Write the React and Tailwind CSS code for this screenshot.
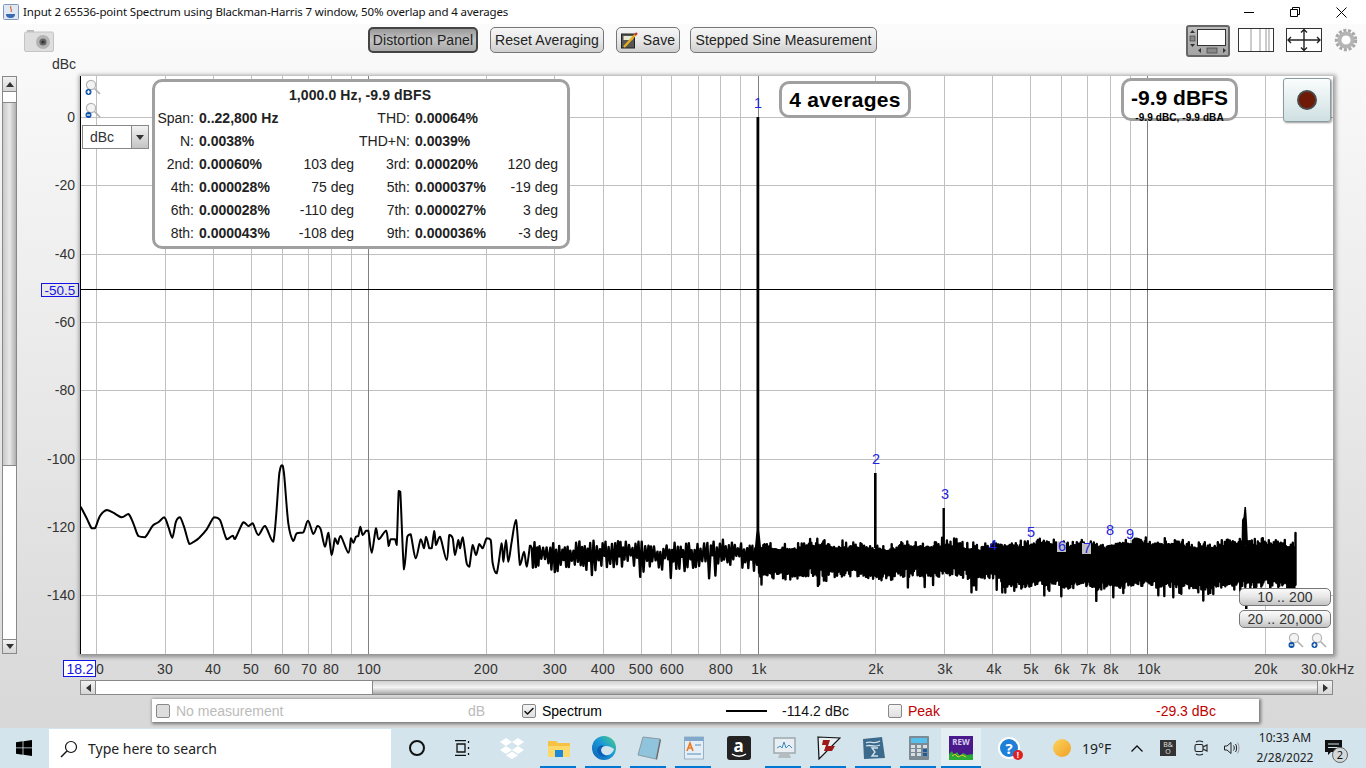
import { Check } from 'lucide-react';

const LIB = "font-['Liberation_Sans',sans-serif]";
const NOTO = "font-['Noto_Sans',sans-serif]";

// log frequency scale, about 390px per decade
const fx = (f) => 368.4 + 389.5 * Math.log10(f / 100);
const GRID_F = [20, 30, 40, 50, 60, 70, 80, 90, 200, 300, 400, 500, 600, 700, 800, 900, 2000, 3000, 4000, 5000, 6000, 7000, 8000, 9000, 20000];
const DARK_F = [100, 1000, 10000];
const GRID_Y = [117, 185, 254, 322, 390, 459, 527, 595];
const Y_LABELS = ['0', '-20', '-40', '-60', '-80', '-100', '-120', '-140'];
const X_LABELS = [
    [100, '0'], [165, '30'], [213, '40'], [251, '50'], [282, '60'], [309, '70'], [331, '80'], [369, '100'],
    [486, '200'], [555, '300'], [603, '400'], [641, '500'], [672, '600'], [721, '800'], [759, '1k'], [876, '2k'],
    [945, '3k'], [994, '4k'], [1031, '5k'], [1062, '6k'], [1088, '7k'], [1111, '8k'], [1149, '10k'], [1266, '20k'],
];
const MARKERS = [
    [758, 108, '1'], [876, 464, '2'], [945, 499, '3'], [993, 550, '4'], [1031, 537, '5'],
    [1062, 551, '6'], [1087, 553, '7'], [1110, 535, '8'], [1130, 539, '9'],
];

// low frequency part of the trace, traced by eye (x/3+70, y/3+440)
const LOW = [
    [32,200],[50,235],[65,265],[75,265],[90,228],[110,210],[130,218],[155,232],[175,222],[190,250],[205,288],[225,292],
    [248,257],[265,247],[283,232],[295,260],[307,293],[318,245],[330,232],[342,260],[358,312],[372,305],[388,293],[410,268],
    [432,232],[450,240],[470,298],[488,287],[495,297],[520,247],[535,258],[548,250],[565,285],[585,258],[610,305],[628,100],[636,76],
    [642,100],[655,250],[670,303],[680,280],[700,277],[714,242],[730,282],[742,258],[752,268],[765,320],[775,278],[785,345],
    [795,295],[803,312],[812,288],[835,338],[843,295],[850,308],[858,290],[865,288],[871,260],[878,285],[888,272],[895,272],
    [905,338],[918,265],[926,298],[948,272],[956,318],[962,298],[975,298],[980,315],[986,153],[991,155],[1002,388],[1012,290],
    [1022,283],[1037,355],[1052,298],[1062,325],[1068,290],[1078,325],[1085,325],[1093,273],[1098,315],[1110,290],[1130,360],
    [1138,285],[1148,295],[1155,345],[1165,300],[1170,325],[1178,292],[1190,370],[1198,380],[1208,315],[1218,345],[1228,312],
    [1238,325],[1250,295],[1262,300],[1268,370],[1280,400],[1295,310],[1300,365],[1308,300],[1315,365],[1325,305],[1338,240],
    [1350,375],[1362,335],[1370,380],[1380,315],
].map(([x, y]) => [x / 3 + 70, y / 3 + 440]);

const clamp = (v, a, b) => Math.min(Math.max(v, Math.min(a, b)), Math.max(a, b));

// Catmull-Rom for the smooth part, y clamped so peaks don't overshoot
const buildLow = () => {
    let d = `M${LOW[0][0]} ${LOW[0][1]}`;
    for (let i = 0; i < LOW.length - 1; i++) {
        const p0 = LOW[Math.max(i - 1, 0)];
        const p1 = LOW[i];
        const p2 = LOW[i + 1];
        const p3 = LOW[Math.min(i + 2, LOW.length - 1)];
        const c1x = p1[0] + (p2[0] - p0[0]) / 6;
        const c1y = clamp(p1[1] + (p2[1] - p0[1]) / 6, p1[1], p2[1]);
        const c2x = p2[0] - (p3[0] - p1[0]) / 6;
        const c2y = clamp(p2[1] - (p3[1] - p1[1]) / 6, p1[1], p2[1]);
        d += `C${c1x.toFixed(1)} ${c1y.toFixed(1)} ${c2x.toFixed(1)} ${c2y.toFixed(1)} ${p2[0].toFixed(1)} ${p2[1].toFixed(1)}`;
    }
    return d;
};

// noise floor: alternate between top and bottom of the band
const buildNoise = () => {
    let seed = 12345;
    const rnd = () => {
        seed = (seed * 16807) % 2147483647;
        return seed / 2147483647;
    };
    let x = 530;
    let up = true;
    let d = `M530 ${LOW[LOW.length - 1][1]}`;
    while (x < 1295) {
        const wander = 1.5 * Math.sin(x / 17) + Math.sin(x / 7.3);
        let y;
        if (x < 758) {
            const mid = 552 + wander;
            y = up ? mid - 2 - rnd() * 9 : mid + 4 + rnd() * 13 + (rnd() < 0.16 ? rnd() * 14 : 0);
            x += 1.1 + rnd() * 0.8;
        } else if (x < 1000) {
            y = up ? 549 + wander - rnd() * rnd() * 10 : 569 + wander + rnd() * 9 + (rnd() < 0.14 ? rnd() * 17 : 0);
            x += 0.6;
        } else {
            y = up ? 547 + wander - rnd() * rnd() * 9 : 580 + wander + rnd() * 8 + (rnd() < 0.12 ? rnd() * 15 : 0);
            x += 0.5;
        }
        d += `L${x.toFixed(1)} ${y.toFixed(1)}`;
        up = !up;
    }
    d += 'L1295.5 533L1295.5 585';
    return d;
};
const TRACE_LOW = buildLow();
const TRACE_NOISE = buildNoise();

const Btn = ({ children, pressed, className = '' }) => (
    <div className={`h-[26px] flex items-center justify-center rounded-[5px] border text-[14px] tracking-[0.1px] text-[#222] ${pressed ? 'border-[#444] border-2 bg-linear-to-b from-[#9a9a9a] via-[#c4c4c4] to-[#a8a8a8]' : 'border-[#777] bg-linear-to-b from-[#f6f6f6] via-[#e8e8e8] to-[#cfcfcf]'} ${className}`}>
        {children}
    </div>
);

const Magnifier = ({ minus, className = '' }) => (
    <svg width="16" height="17" viewBox="0 0 16 17" className={className}>
        <circle cx="6" cy="6" r="4.6" fill="#f3f3f3" stroke="#b4b4b4" strokeWidth="1.2" />
        <line x1="9.5" y1="9.5" x2="15" y2="15" stroke="#b0b0b0" strokeWidth="1.6" />
        <circle cx="3.5" cy="13" r="3" fill="#0b4fa8" />
        <line x1="1.8" y1="13" x2="5.2" y2="13" stroke="#fff" strokeWidth="1.2" />
        {!minus && <line x1="3.5" y1="11.3" x2="3.5" y2="14.7" stroke="#fff" strokeWidth="1.2" />}
    </svg>
);

const Arrow = ({ dir }) => {
    const pts = { up: '0,5 8,5 4,0', down: '0,0 8,0 4,5', left: '5,0 5,8 0,4', right: '0,0 0,8 5,4' }[dir];
    const vertical = dir === 'up' || dir === 'down';
    return (
        <svg width={vertical ? 8 : 5} height={vertical ? 5 : 8}>
            <polygon points={pts} fill="#333" />
        </svg>
    );
};

const ScrollBtn = ({ dir, className = '' }) => (
    <div className={`flex items-center justify-center bg-linear-to-b from-[#f2f2f2] to-[#d6d6d6] ${className}`}>
        <Arrow dir={dir} />
    </div>
);

const Toolbar = () => (
    <div className="h-[52px] flex shrink-0">
        <div className="w-[368px] shrink-0 flex flex-col">
            <svg width="30" height="22" viewBox="0 0 30 22" className="ml-[24px] mt-[6px]">
                <rect x="3" y="0" width="7" height="3" fill="#bbb" />
                <rect x="0.5" y="2" width="29" height="19.5" rx="1.5" fill="#dedede" stroke="#c4c4c4" />
                <circle cx="19" cy="12" r="7" fill="#b4b4b4" />
                <circle cx="19" cy="12" r="3.6" fill="#666" />
                <circle cx="19" cy="12" r="1.6" fill="#333" />
            </svg>
            <div className="ml-[52px] mt-[4px] text-[14px] leading-[16px] text-[#333]">dBc</div>
        </div>
        <div className="flex items-start pt-[3px] w-[509px] shrink-0">
            <Btn pressed className="w-[110px]">Distortion Panel</Btn>
            <Btn className="w-[114px] ml-[12px]">Reset Averaging</Btn>
            <Btn className="w-[64px] ml-[12px] gap-[5px]">
                <svg width="17" height="17" viewBox="0 0 17 17">
                    <rect x="0.5" y="2" width="13" height="14" fill="#555" stroke="#222" />
                    <rect x="2.5" y="4" width="9" height="4" fill="#e8e8d0" />
                    <line x1="3" y1="15" x2="15" y2="2" stroke="#e8b020" strokeWidth="2.4" />
                    <line x1="14" y1="3" x2="16" y2="1" stroke="#c8342a" strokeWidth="2.4" />
                </svg>
                Save
            </Btn>
            <Btn className="w-[187px] ml-[10px]">Stepped Sine Measurement</Btn>
        </div>
        <div className="flex items-start pt-[1px] ml-[309px]">
            <div className="w-[44px] h-[32px] rounded-[3px] border-2 border-[#666] bg-linear-to-b from-[#bdbdbd] to-[#a4a4a4] shrink-0">
                <svg width="40" height="28" viewBox="0 0 40 28">
                    <rect x="9.5" y="2.5" width="28" height="16" fill="#fff" stroke="#333" />
                    <polygon points="2,6 7,6 4.5,3" fill="#333" />
                    <rect x="2" y="9" width="5" height="5" fill="#888" stroke="#333" strokeWidth="0.6" />
                    <polygon points="2,17 7,17 4.5,20" fill="#333" />
                    <polygon points="13,21 13,26 10,23.5" fill="#333" />
                    <rect x="19" y="21" width="10" height="5" fill="#888" stroke="#333" strokeWidth="0.6" />
                    <polygon points="35,21 35,26 38,23.5" fill="#333" />
                </svg>
            </div>
            <svg width="36" height="24" viewBox="0 0 36 24" className="ml-[8px] mt-[3px] shrink-0">
                <rect x="0.5" y="0.5" width="35" height="23" fill="#fff" stroke="#333" />
                {[13, 22, 28, 31].map((x) => <line key={x} x1={x} y1="1" x2={x} y2="23" stroke="#999" />)}
            </svg>
            <svg width="36" height="24" viewBox="0 0 36 24" className="ml-[12px] mt-[3px] shrink-0">
                <rect x="0.5" y="0.5" width="35" height="23" fill="#fff" stroke="#333" />
                <path d="M2 12H34M18 1.5V22.5M5 9L2 12L5 15M31 9L34 12L31 15M15 4.5L18 1.5L21 4.5M15 19.5L18 22.5L21 19.5" fill="none" stroke="#222" strokeWidth="1.4" />
            </svg>
            <svg width="24" height="24" viewBox="0 0 24 24" className="ml-[12px] mt-[3px] shrink-0">
                <circle cx="12" cy="12" r="9.6" fill="none" stroke="#a8a8a8" strokeWidth="3.2" strokeDasharray="3 1.7" />
                <circle cx="12" cy="12" r="6.6" fill="none" stroke="#b4b4b4" strokeWidth="4" />
                <circle cx="12" cy="12" r="4" fill="#fff" />
            </svg>
        </div>
    </div>
);

const StatLabel = ({ children }) => <div className="text-right whitespace-nowrap">{children}</div>;
const StatValue = ({ children }) => <div className="pl-[5px] font-bold whitespace-nowrap">{children}</div>;
const StatDeg = ({ children }) => <div className="text-right whitespace-nowrap">{children}</div>;

const STATS = [
    ['Span:', '0..22,800 Hz', '', 'THD:', '0.00064%', ''],
    ['N:', '0.0038%', '', 'THD+N:', '0.0039%', ''],
    ['2nd:', '0.00060%', '103 deg', '3rd:', '0.00020%', '120 deg'],
    ['4th:', '0.000028%', '75 deg', '5th:', '0.000037%', '-19 deg'],
    ['6th:', '0.000028%', '-110 deg', '7th:', '0.000027%', '3 deg'],
    ['8th:', '0.000043%', '-108 deg', '9th:', '0.000036%', '-3 deg'],
];

const InfoPanel = () => (
    <div className="absolute left-[72px] top-[3px] w-[418px] h-[170px] rounded-[10px] border-[3px] border-[#a0a0a0] bg-white text-[14px] leading-[23px] text-[#222] pt-[2px]">
        <div className="text-center font-bold h-[23px] pr-[2px] tracking-[0.1px]">1,000.0 Hz, -9.9 dBFS</div>
        <div className="grid grid-cols-[39px_96px_64px_56px_90px_58px]">
            {STATS.map((row) => (
                <div key={row[0]} className="contents">
                    <StatLabel>{row[0]}</StatLabel>
                    <StatValue>{row[1]}</StatValue>
                    <StatDeg>{row[2]}</StatDeg>
                    <StatLabel>{row[3]}</StatLabel>
                    <StatValue>{row[4]}</StatValue>
                    <StatDeg>{row[5]}</StatDeg>
                </div>
            ))}
        </div>
    </div>
);

const RangeBtn = ({ children }) => (
    <div className="w-[92px] h-[18px] rounded-[5px] border border-[#777] bg-linear-to-b from-[#fafafa] via-[#e6e6e6] to-[#c4c4c4] flex items-center justify-center text-[14px] tracking-[0.1px] text-[#333]">
        {children}
    </div>
);

const Plot = () => (
    <div className="relative w-[1253px] h-[578px] bg-white shrink-0 shadow-[1px_1px_4px_2px_rgba(0,0,0,0.35)]">
        <svg width="1253" height="578" viewBox="80 76 1253 578" className="block">
            {GRID_F.map((f) => <line key={f} x1={Math.round(fx(f)) + 0.5} y1="76" x2={Math.round(fx(f)) + 0.5} y2="654" stroke="#c0c0c0" />)}
            {GRID_Y.map((y) => <line key={y} x1="80" y1={y + 0.5} x2="1333" y2={y + 0.5} stroke="#c0c0c0" />)}
            {DARK_F.map((f) => <line key={f} x1={Math.round(fx(f)) + 0.5} y1="76" x2={Math.round(fx(f)) + 0.5} y2="654" stroke="#808080" />)}
            <line x1="80" y1="289.5" x2="1333" y2="289.5" stroke="#000" />
            <line x1="80.5" y1="76" x2="80.5" y2="654" stroke="#000" />
            <path d={TRACE_LOW} fill="none" stroke="#000" strokeWidth="2" strokeLinejoin="round" />
            <path d={TRACE_NOISE} fill="none" stroke="#000" strokeWidth="2.4" strokeLinejoin="round" />
            {/* harmonics and the bump near 19k */}
            <path d="M756.5 117H759.3V530L761.5 552H754.5L756.5 530Z" fill="#000" />
            <rect x="874" y="473" width="2.6" height="75" fill="#000" />
            <rect x="942.5" y="508" width="2.4" height="40" fill="#000" />
            <path d="M1241.5 545L1242 520L1243.5 517L1244.5 507L1246 507L1247 522L1248 545Z" fill="#000" />
            <rect x="1245" y="590" width="2.5" height="19" fill="#000" />
            <rect x="1057" y="542" width="9" height="10" fill="#c0c0c0" />
            <rect x="1082" y="543" width="9" height="11" fill="#c0c0c0" />
            {MARKERS.map(([x, y, t]) => (
                <text key={t} x={x} y={y} textAnchor="middle" fontSize="14.5" fill="#2222e0" className={LIB}>{t}</text>
            ))}
        </svg>

        <Magnifier className="absolute left-[5px] top-[3px]" />
        <Magnifier minus className="absolute left-[5px] top-[26px]" />

        <div className="absolute left-[2px] top-[49px] w-[67px] h-[24px] border border-[#888] bg-white flex items-center text-[14px] text-[#333]">
            <span className="pl-[7px] flex-1">dBc</span>
            <div className="w-[17px] h-full border-l border-[#888] bg-linear-to-b from-[#f2f2f2] to-[#c4c4c4] flex items-center justify-center">
                <Arrow dir="down" />
            </div>
        </div>

        <InfoPanel />

        <div className="absolute left-[699px] top-[5px] w-[132px] h-[37px] rounded-[10px] border-[3px] border-[#a0a0a0] bg-white flex items-center justify-center text-[21px] font-bold tracking-[0.3px] text-black">
            4 averages
        </div>

        <div className="absolute left-[1041px] top-[2px] w-[117px] h-[43px] rounded-[10px] border-[3px] border-[#a0a0a0] bg-white text-center text-black">
            <div className="text-[21px] font-bold leading-[24px] mt-[5px]">-9.9 dBFS</div>
            <div className="absolute left-0 right-0 top-[31px] text-[10px] leading-[12px] font-bold tracking-[0.1px]">-9.9 dBC, -9.9 dBA</div>
        </div>

        <div className="absolute left-[1203px] top-[2px] w-[48px] h-[44px] rounded-[3px] border border-[#8a9a9e] bg-linear-to-b from-[#fafdfd] to-[#cfe0e2] shadow-[1px_1px_2px_rgba(0,0,0,0.4)] flex items-center justify-center">
            <div className="w-[20px] h-[20px] rounded-full bg-[#6e1a06] border-2 border-[#4a4a4a]" />
        </div>

        <div className="absolute right-[2px] bottom-[26px] flex flex-col gap-[4px]">
            <RangeBtn>10 .. 200</RangeBtn>
            <RangeBtn>20 .. 20,000</RangeBtn>
        </div>
        <div className="absolute right-[6px] bottom-[5px] flex gap-[7px]">
            <Magnifier minus />
            <Magnifier />
        </div>
    </div>
);

const VScroll = () => (
    <div className="ml-[2px] w-[15px] h-[578px] shrink-0 flex flex-col border border-[#888] bg-white">
        <ScrollBtn dir="up" className="h-[15px] border-b border-[#888] shrink-0" />
        <div className="h-[10px] shrink-0" />
        <div className="h-[364px] shrink-0 border-y border-[#888] bg-linear-to-r from-[#c8c8c8] via-[#e8e8e8] to-[#b0b0b0]" />
        <div className="flex-1" />
        <ScrollBtn dir="down" className="h-[14px] border-t border-[#888] shrink-0" />
    </div>
);

const YAxis = () => (
    <svg width="63" height="578" viewBox="17 76 63 578" className={`shrink-0 ${LIB}`}>
        {GRID_Y.map((y, i) => (
            <text key={y} x="75" y={y + 5} textAnchor="end" fontSize="14" fill="#333">{Y_LABELS[i]}</text>
        ))}
        <rect x="41.5" y="283.5" width="37" height="13" fill="#e8e8e8" stroke="#1414e6" />
        <text x="60" y="294.5" textAnchor="middle" fontSize="13.5" fill="#1414e6">-50.5</text>
    </svg>
);

const XAxis = () => (
    <svg width="1366" height="26" viewBox="0 654 1366 26" className={`block shrink-0 ${LIB}`}>
        {X_LABELS.map(([x, t]) => (
            <text key={x} x={x} y="674" textAnchor="middle" fontSize="14" letterSpacing="0.3" fill="#333">{t}</text>
        ))}
        <text x="1301" y="674" fontSize="14" letterSpacing="0.3" fill="#333">30.0kHz</text>
        <rect x="63.5" y="660.5" width="32" height="16" fill="#fff" stroke="#1414e6" />
        <text x="80" y="674" textAnchor="middle" fontSize="14" fill="#1414e6">18.2</text>
    </svg>
);

const HScroll = () => (
    <div className="ml-[80px] w-[1253px] h-[15px] shrink-0 flex border border-[#888] bg-white">
        <ScrollBtn dir="left" className="w-[15px] border-r border-[#888] shrink-0" />
        <div className="w-[276px] shrink-0" />
        <div className="flex-1 border-l border-[#888] bg-linear-to-b from-[#d0d0d0] via-[#f4f4f4] to-[#a8a8a8]" />
        <ScrollBtn dir="right" className="w-[15px] border-l border-[#888] shrink-0" />
    </div>
);

const Box = ({ checked, disabled }) => (
    <div className={`w-[14px] h-[14px] rounded-[2px] border border-[#888] shrink-0 flex items-center justify-center ${disabled ? 'bg-[#ddd]' : 'bg-linear-to-b from-[#f4f4f4] to-[#e0e0e0]'}`}>
        {checked && <Check size={13} strokeWidth={3} color="#111" />}
    </div>
);

const Legend = () => (
    <div className="ml-[152px] mt-[4px] w-[1107px] h-[23px] shrink-0 bg-white flex items-center pt-[1px] text-[14px] shadow-[1px_1px_3px_1px_rgba(0,0,0,0.45)]">
        <div className="w-[24px] pl-[4px]"><Box disabled /></div>
        <div className="w-[292px] text-[#bbb]">No measurement</div>
        <div className="w-[54px] text-[#bbb]">dB</div>
        <div className="w-[20px]"><Box checked /></div>
        <div className="w-[184px] text-black">Spectrum</div>
        <div className="w-[41px] h-[2px] bg-black" />
        <div className="w-[106px] ml-[15px] text-[#111] tracking-[0.05px]">-114.2 dBc</div>
        <div className="w-[20px]"><Box /></div>
        <div className="w-[248px] text-[#c00000]">Peak</div>
        <div className="text-[#c00000]">-29.3 dBc</div>
    </div>
);

const Slot = ({ children, bar, className = 'w-[45px]' }) => (
    <div className={`relative h-full flex items-center justify-center shrink-0 ${className}`}>
        {children}
        {bar && <div className="absolute bottom-0 left-[4px] right-[5px] h-[2px] bg-[#0078d4]" />}
    </div>
);

const Taskbar = () => (
    <div className={`h-[40px] shrink-0 flex items-center bg-[#d3e4ec] ${NOTO}`}>
        <div className="w-[49px] flex justify-center pr-[1px] shrink-0">
            <svg width="16" height="16" viewBox="0 0 16 16">
                <path d="M0 2.2L6.6 1.3V7.5H0ZM7.4 1.2L16 0V7.5H7.4ZM0 8.3H6.6V14.7L0 13.8ZM7.4 8.3H16V16L7.4 14.8Z" fill="#000" />
            </svg>
        </div>
        <div className="w-[342px] h-[39px] mt-[1px] bg-white flex items-center shrink-0">
            <svg width="18" height="18" viewBox="0 0 18 18" className="ml-[11px]">
                <circle cx="11" cy="7" r="5.5" fill="none" stroke="#111" strokeWidth="1.2" />
                <line x1="7" y1="11" x2="1" y2="17" stroke="#111" strokeWidth="1.4" />
            </svg>
            <span className="ml-[10px] text-[14px] text-[#222]">Type here to search</span>
        </div>
        <Slot className="w-[45px] ml-[3px]">
            <div className="w-[16px] h-[16px] rounded-full border-[2.5px] border-[#111]" />
        </Slot>
        <Slot className="w-[48px]">
            <svg width="17" height="16" viewBox="0 0 17 16" fill="none" stroke="#111" strokeWidth="1.3">
                <path d="M0 .7H11M0 15.3H11M2 4H10V12H2ZM13.5 1V3M13.5 7V9M13.5 13V15" />
            </svg>
        </Slot>
        <Slot className="w-[49px]">
            <svg width="24" height="22" viewBox="0 0 24 22" fill="#fff">
                <path d="M6 1L12 5L6 9L0 5ZM18 1L24 5L18 9L12 5ZM6 9L12 13L6 17L0 13ZM18 9L24 13L18 17L12 13ZM12 14.5L18 18.5L12 22L6 18.5Z" />
            </svg>
        </Slot>
        <Slot bar>
            <svg width="22" height="19" viewBox="0 0 22 19">
                <path d="M0 2H8L10 4H22V18H0Z" fill="#f6c244" />
                <rect x="0" y="7" width="22" height="11" fill="#fbd96b" />
                <rect x="7" y="11" width="8" height="7" fill="#1c8ad8" />
            </svg>
        </Slot>
        <Slot bar>
            <svg width="24" height="24" viewBox="0 0 24 24">
                <defs>
                    <linearGradient id="edge" x1="0" y1="1" x2="1" y2="0">
                        <stop offset="0" stopColor="#0b5fb8" />
                        <stop offset="0.55" stopColor="#1a9ad6" />
                        <stop offset="1" stopColor="#50d080" />
                    </linearGradient>
                </defs>
                <circle cx="12" cy="12" r="12" fill="url(#edge)" />
                <path d="M9 14C9 9 17 9 22 13C21 17 17 20 13 19C10 18 9 16 9 14Z" fill="#d3e4ec" />
                <path d="M9 14C9 17 12 20 16 20C12 22 6 20 5 15C5 11 9 8 12 10C10 11 9 12 9 14Z" fill="#0b5fb8" />
            </svg>
        </Slot>
        <Slot bar>
            <svg width="24" height="24" viewBox="0 0 24 24">
                <path d="M6 1L23 3L19 23L1 19Z" fill="#8fc4dc" stroke="#8a9aa4" />
                <path d="M19 23L23 3L24 4L20 24Z" fill="#666" />
            </svg>
        </Slot>
        <Slot bar>
            <svg width="20" height="24" viewBox="0 0 20 24">
                <rect x="0.5" y="1" width="19" height="22" fill="#e4eef6" stroke="#9ab0c4" />
                <rect x="0.5" y="1" width="19" height="4" fill="#7fa8cc" />
                <path d="M3 15L6 7L9 15M4 12H8" fill="none" stroke="#e87820" strokeWidth="1.6" />
                <line x1="11" y1="9" x2="17" y2="9" stroke="#7fa8cc" strokeWidth="1.4" />
                <line x1="3" y1="18" x2="17" y2="18" stroke="#7fa8cc" strokeWidth="1.4" />
            </svg>
        </Slot>
        <Slot>
            <div className="relative w-[24px] h-[24px] rounded-[3px] bg-[#222] text-white text-[17px] leading-[19px] text-center font-bold">
                a
                <svg width="24" height="24" viewBox="0 0 24 24" className="absolute left-0 top-0">
                    <path d="M5 18C9 21 15 21 19 18" fill="none" stroke="#fff" strokeWidth="1.3" />
                </svg>
            </div>
        </Slot>
        <Slot bar>
            <svg width="24" height="24" viewBox="0 0 24 24">
                <rect x="2" y="2" width="21" height="15" fill="#e8eef2" stroke="#9aa4aa" strokeWidth="1.4" />
                <path d="M5 12L8 10L10 12L12 6L14 12L17 9L20 12" fill="none" stroke="#3a8ac4" />
                <path d="M8 17H17L19 22H6Z" fill="#b4bcc0" />
            </svg>
        </Slot>
        <Slot bar>
            <svg width="24" height="24" viewBox="0 0 24 24">
                <path d="M1 1L23 2L2 23Z" fill="#e8f0f4" stroke="#111" strokeWidth="1.2" />
                <path d="M6 4H13L11 10H18L15 15H7L9 9H5Z" fill="#9c1a18" />
            </svg>
        </Slot>
        <Slot bar>
            <svg width="24" height="24" viewBox="0 0 24 24">
                <path d="M1 3L20 1L23 22L2 23Z" fill="#3c6a8c" />
                <path d="M4 7C8 4 12 9 18 5M4 10C8 8 12 12 18 9" fill="none" stroke="#cfe0ea" strokeWidth="1.3" />
                <path d="M16 12H10L13 16L10 20H16" fill="none" stroke="#cfe0ea" strokeWidth="1.4" />
            </svg>
        </Slot>
        <Slot bar>
            <svg width="20" height="24" viewBox="0 0 20 24">
                <rect x="0" y="0" width="20" height="24" rx="1" fill="#7c8a94" />
                <rect x="2" y="2" width="16" height="5" fill="#58c0ec" />
                {[9, 13, 17].map((y) => [2, 8, 14].map((x) => (
                    <rect key={`${x}-${y}`} x={x} y={y} width="4" height="3" fill={x === 14 && y > 9 ? '#1c5c9c' : '#d8dee2'} />
                )))}
            </svg>
        </Slot>
        <div className="relative w-[40px] h-full bg-[#e4eff4] flex items-center justify-center shrink-0">
            <div className="relative w-[24px] h-[24px] bg-[#4a1a8c] text-[8px] leading-[12px] font-bold text-[#d8d0f0] text-center">
                REW
                <svg width="24" height="24" viewBox="0 0 24 24" className="absolute left-0 top-0">
                    <path d="M0 24V18L3 15L5 19L8 16L11 20L14 17L18 19L24 18V24Z" fill="#2aa838" />
                    <path d="M3 20L6 18L9 21L13 19L17 21" fill="none" stroke="#e8d020" />
                </svg>
            </div>
            <div className="absolute bottom-0 left-0 right-0 h-[2px] bg-[#0078d4]" />
        </div>
        <Slot className="w-[56px]">
            <div className="relative w-[22px] h-[22px] rounded-full bg-[#1f7fd8] border-2 border-white text-white text-[15px] leading-[18px] font-bold text-center">
                ?
                <div className="absolute right-[-5px] bottom-[-3px] w-[10px] h-[10px] rounded-full bg-[#e02020] text-[8px] leading-[10px]">!</div>
            </div>
        </Slot>
        <Slot className="w-[45px] justify-end pr-[11px]">
            <div className="w-[18px] h-[18px] rounded-full bg-linear-to-br from-[#fbd45c] to-[#f0a020]" />
        </Slot>
        <div className="w-[38px] text-[14px] text-[#222] shrink-0">19°F</div>
        <Slot className="w-[34px]">
            <svg width="12" height="7" viewBox="0 0 12 7" fill="none" stroke="#111" strokeWidth="1.3">
                <path d="M.5 6.5L6 1L11.5 6.5" />
            </svg>
        </Slot>
        <Slot className="w-[28px]">
            <div className="w-[16px] h-[16px] bg-[#333] text-[#ddd] text-[7px] leading-[7px] text-center pt-[1px]">B&amp;<br />O</div>
        </Slot>
        <Slot className="w-[38px]">
            <svg width="14" height="16" viewBox="0 0 14 16" fill="none" stroke="#222" strokeWidth="1.1">
                <rect x="1" y="4.5" width="8" height="7" rx="1.5" />
                <path d="M9 7L13 5V11L9 9M2 2C4 .8 7 .8 9 2M2 14C4 15.2 7 15.2 9 14" />
            </svg>
        </Slot>
        <Slot className="w-[25px]">
            <svg width="17" height="14" viewBox="0 0 17 14" fill="none" stroke="#222" strokeWidth="1">
                <path d="M.5 5H3L7 1.5V12.5L3 9H.5Z" />
                <path d="M9.5 4.5C10.5 6 10.5 8 9.5 9.5M11.5 3C13 5 13 9 11.5 11" />
                <path d="M13.5 1.5C15.5 4.5 15.5 9.5 13.5 12.5" stroke="#999" />
            </svg>
        </Slot>
        <div className="w-[80px] text-center text-[12px] leading-[20px] text-[#222] shrink-0">
            <div>10:33 AM</div>
            <div>2/28/2022</div>
        </div>
        <Slot className="w-[41px] justify-start">
            <div className="relative">
                <svg width="17" height="16" viewBox="0 0 17 16">
                    <path d="M0 0H17V12H6L3 15V12H0Z" fill="#111" />
                    <path d="M3 4H14M3 7.5H14" stroke="#d3e4ec" />
                </svg>
                <div className="absolute left-[7px] top-[7px] w-[16px] h-[16px] rounded-full bg-[#d3d8da] border border-[#666] text-[11px] leading-[14px] text-center text-[#111]">2</div>
            </div>
        </Slot>
    </div>
);

export default function App() {
    return (
        <div className={`w-[1366px] h-[768px] flex flex-col overflow-hidden bg-white ${LIB}`}>
            {/* Title bar */}
            <div className="h-[24px] shrink-0 flex items-center bg-white">
                <svg width="16" height="16" viewBox="0 0 16 16" className="ml-[3px] shrink-0">
                    <rect x="0.5" y="0.5" width="15" height="15" rx="1" fill="#dfe8f4" stroke="#7f98b8" />
                    <path d="M8 2C6 5 10 5 8 8" fill="none" stroke="#e06820" strokeWidth="1.2" />
                    <path d="M3 10H12C12 13 10 14 7.5 14C5 14 3 13 3 10Z" fill="#3a6ab0" />
                </svg>
                <span className={`ml-[4px] text-[11.5px] tracking-[-0.15px] text-[#111] whitespace-nowrap ${NOTO}`}>
                    Input 2 65536-point Spectrum using Blackman-Harris 7 window, 50% overlap and 4 averages
                </span>
                <div className="ml-auto pr-[2px] flex items-center shrink-0">
                    <div className="w-[46px] flex justify-center"><div className="w-[10px] h-[1px] bg-black" /></div>
                    <div className="w-[46px] flex justify-center">
                        <svg width="10" height="10" viewBox="0 0 10 10" fill="none" stroke="#000">
                            <path d="M.5 2.5H7.5V9.5H.5ZM2.5 2.5V.5H9.5V7.5H7.5" />
                        </svg>
                    </div>
                    <div className="w-[46px] flex justify-center">
                        <svg width="11" height="11" viewBox="0 0 11 11" stroke="#000">
                            <path d="M.5 .5L10.5 10.5M10.5 .5L.5 10.5" />
                        </svg>
                    </div>
                </div>
            </div>

            {/* Main window */}
            <div className="flex-1 min-h-0 flex flex-col bg-linear-to-b from-[#fbfbfb] to-[#d8d8d8]">
                <Toolbar />
                <div className="flex shrink-0">
                    <VScroll />
                    <YAxis />
                    <Plot />
                </div>
                <XAxis />
                <HScroll />
                <Legend />
            </div>

            <Taskbar />
        </div>
    );
}
